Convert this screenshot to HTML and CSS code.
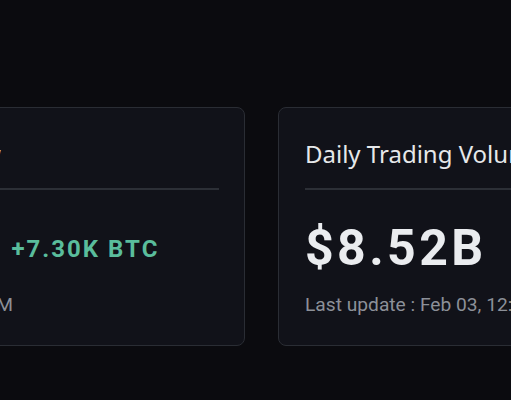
FILE: index.html
```html
<!DOCTYPE html>
<html>
<head>
<meta charset="utf-8">
<link rel="stylesheet" href="styles.css">
</head>
<body>
<main class="stage">
  <div class="track">
    <section class="card card-flow">
      <h2 class="card-title">BTC Spot ETF Net Flow</h2>
      <div class="rule"></div>
      <div class="value-row">
        <span class="value">$718.4M</span>
        <span class="value-sub up">+7.30K BTC</span>
      </div>
      <p class="note">Last update : Feb 03, 12:00 AM</p>
    </section>
    <section class="card">
      <h2 class="card-title">Daily Trading Volume</h2>
      <div class="rule"></div>
      <div class="value-row">
        <span class="value">$8.52B</span>
      </div>
      <p class="note">Last update : Feb 03, 12:00 AM</p>
    </section>
  </div>
</main>
</body>
</html>
```
FILE: styles.css
```css
html, body {
  margin: 0;
  padding: 0;
  background: #0b0b0f;
  overflow: hidden;
}
.stage {
  width: 511px;
  height: 400px;
  overflow: hidden;
  padding-top: 107px;
  box-sizing: border-box;
}
.track {
  display: flex;
  gap: 33px;
  margin-left: -277px;
}
.card {
  flex: 0 0 522px;
  height: 239px;
  box-sizing: border-box;
  background: #111219;
  border: 1px solid #2a2d34;
  border-radius: 8px;
  padding: 30px 25px 0 26px;
}
.card-title {
  margin: 0;
  font-family: "Noto Sans", sans-serif;
  font-weight: 400;
  font-size: 24px;
  line-height: 32px;
  color: #e6e8ea;
  white-space: nowrap;
}
.rule {
  height: 2px;
  background: #2c2f36;
  margin-top: 18px;
}
.value-row {
  display: flex;
  align-items: flex-start;
  gap: 36px;
  margin-top: 28px;
  height: 60px;
}
.value {
  font-family: Roboto, sans-serif;
  font-weight: 700;
  font-size: 50px;
  line-height: 60px;
  color: #eaecef;
  letter-spacing: 3.4px;
}
.value-sub {
  margin-top: 16px;
  font-family: Roboto, sans-serif;
  font-weight: 700;
  font-size: 24px;
  line-height: 30px;
  letter-spacing: 2px;
}
.up { color: #5abd9c; }
.note {
  margin: 15px 0 0;
  font-family: Roboto, sans-serif;
  font-size: 19.2px;
  line-height: 24px;
  color: #8c9098;
  white-space: nowrap;
}
```
